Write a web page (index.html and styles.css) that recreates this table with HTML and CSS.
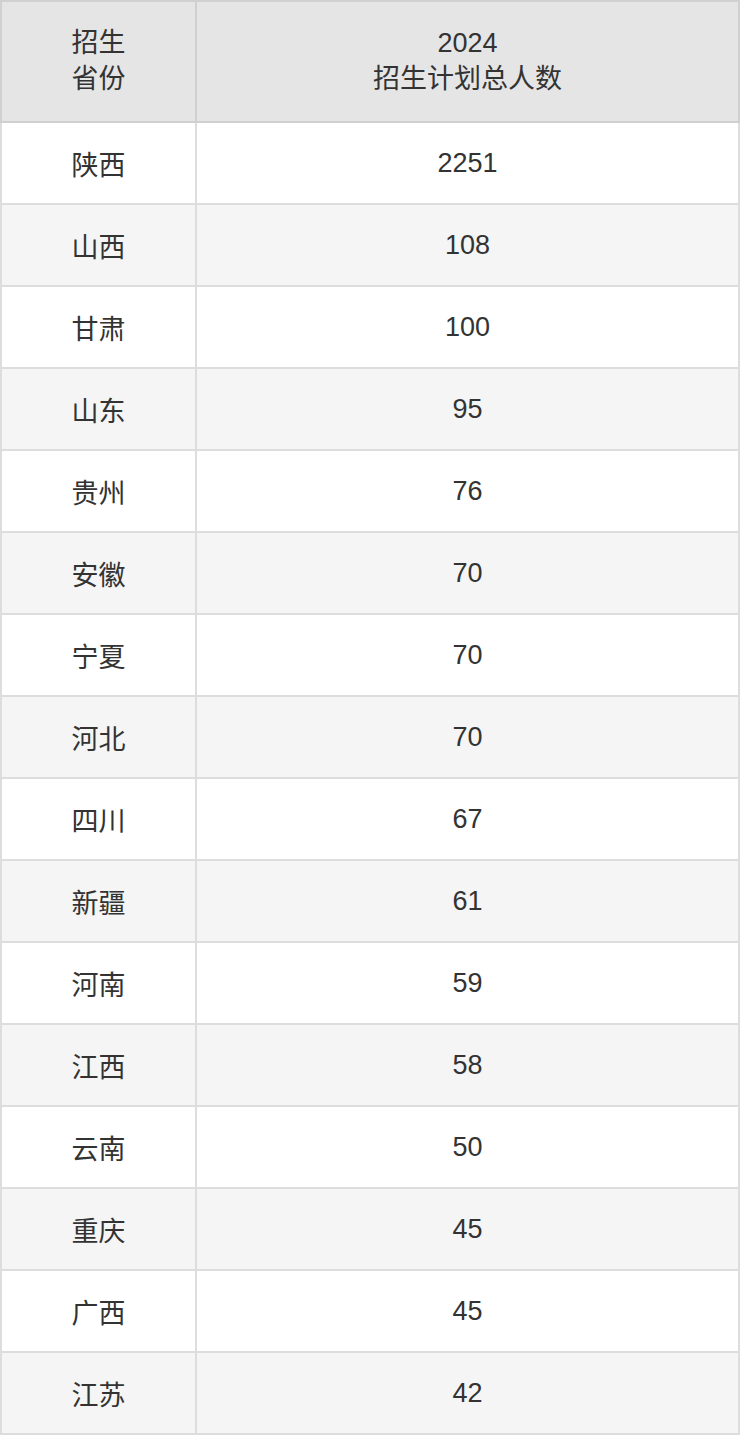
FILE: index.html
```html
<!DOCTYPE html>
<html lang="zh">
<head>
<meta charset="utf-8">
<link rel="stylesheet" href="styles.css">
</head>
<body>
<table class="plan">
  <thead>
    <tr class="head-row">
      <th class="col-prov">招生<br>省份</th>
      <th class="col-num">2024<br>招生计划总人数</th>
    </tr>
  </thead>
  <tbody>
    <tr><td>陕西</td><td>2251</td></tr>
    <tr><td>山西</td><td>108</td></tr>
    <tr><td>甘肃</td><td>100</td></tr>
    <tr><td>山东</td><td>95</td></tr>
    <tr><td>贵州</td><td>76</td></tr>
    <tr><td>安徽</td><td>70</td></tr>
    <tr><td>宁夏</td><td>70</td></tr>
    <tr><td>河北</td><td>70</td></tr>
    <tr><td>四川</td><td>67</td></tr>
    <tr><td>新疆</td><td>61</td></tr>
    <tr><td>河南</td><td>59</td></tr>
    <tr><td>江西</td><td>58</td></tr>
    <tr><td>云南</td><td>50</td></tr>
    <tr><td>重庆</td><td>45</td></tr>
    <tr><td>广西</td><td>45</td></tr>
    <tr><td>江苏</td><td>42</td></tr>
  </tbody>
</table>
</body>
</html>
```

FILE: styles.css
```css
html, body {
  margin: 0;
  padding: 0;
  background: #ffffff;
}

.plan {
  width: 740px;
  border-collapse: collapse;
  font-family: "Liberation Sans", "Noto Sans CJK SC", sans-serif;
  font-size: 27px;
  color: #333333;
  table-layout: fixed;
}

.plan th,
.plan td {
  border: 2px solid #dddddd;
  padding: 0;
  text-align: center;
  vertical-align: middle;
  font-weight: normal;
}

.plan th {
  background: #e5e5e5;
  border-color: #d0d0d0;
  height: 117px;
  line-height: 36px;
  padding-bottom: 2px;
}

.col-prov {
  width: 193px;
}

.plan td {
  height: 80px;
}

.plan tbody tr:nth-child(even) td {
  background: #f5f5f5;
}
```
